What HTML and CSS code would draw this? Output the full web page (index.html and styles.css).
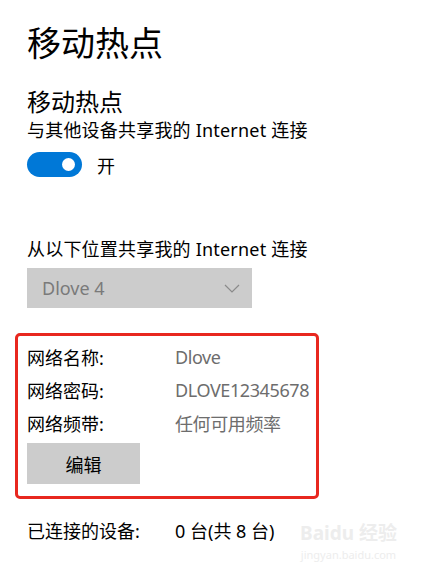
FILE: index.html
```html
<!DOCTYPE html>
<html lang="zh-CN">
<head>
  <meta charset="UTF-8">
  <meta name="viewport" content="width=device-width, initial-scale=1.0">
  <title>移动热点</title>
  <link rel="stylesheet" href="styles.css">
</head>
<body>
  <div class="page">
    <h1>移动热点</h1>

    <h2>移动热点</h2>
    <p class="desc">与其他设备共享我的 Internet 连接</p>
    <div class="toggle-row">
      <span class="toggle"><span class="knob"></span></span>
      <span>开</span>
    </div>

    <p class="share-label">从以下位置共享我的 Internet 连接</p>
    <div class="select">
      <span>Dlove 4</span>
      <svg width="16" height="9" viewBox="0 0 16 9"><path d="M1 1 L8 8 L15 1" fill="none" stroke="#8a8a8a" stroke-width="1.2"/></svg>
    </div>

    <div class="info-box">
      <div class="info-row"><span class="info-label">网络名称:</span><span class="info-value">Dlove</span></div>
      <div class="info-row"><span class="info-label">网络密码:</span><span class="info-value">DLOVE12345678</span></div>
      <div class="info-row"><span class="info-label">网络频带:</span><span class="info-value">任何可用频率</span></div>
      <button class="edit-btn">编辑</button>
    </div>

    <div class="info-row devices">
      <span class="info-label">已连接的设备:</span><span class="info-dark">0 台(共 8 台)</span>
    </div>
  </div>

  <div class="watermark">
    <div class="wm-logo">Baidu 经验</div>
    <div class="wm-url">jingyan.baidu.com</div>
  </div>
</body>
</html>
```

FILE: styles.css
```css
:root {
  --accent: #0078d7;
  --control-bg: #cccccc;
  --muted: #6d6d6d;
  --mark: #e8271f;
}

body {
  margin: 0;
  background: #fff;
  color: #000;
  font-family: "Noto Sans", "Noto Sans CJK SC", sans-serif;
  font-size: 18px;
  position: relative;
  width: 425px;
  height: 583px;
  overflow: hidden;
}

.page {
  padding: 20px 0 0 27px;
}

h1 {
  margin: 0;
  font-size: 34px;
  font-weight: normal;
  line-height: 46px;
}

h2 {
  margin: 21px 0 0;
  font-size: 24px;
  font-weight: normal;
  line-height: 30px;
}

.desc {
  margin: 0;
  line-height: 26px;
  letter-spacing: 0.2px;
}

.toggle-row {
  display: flex;
  align-items: center;
  gap: 15px;
  margin-top: 9px;
  height: 25px;
}

.toggle {
  display: flex;
  align-items: center;
  justify-content: flex-end;
  width: 55px;
  height: 25px;
  border-radius: 13px;
  background: var(--accent);
  box-sizing: border-box;
  padding-right: 7px;
}

.knob {
  width: 13px;
  height: 13px;
  border-radius: 50%;
  background: #fff;
}

.share-label {
  margin: 59px 0 0;
  line-height: 26px;
  letter-spacing: 0.2px;
}

.select {
  display: flex;
  align-items: center;
  justify-content: space-between;
  width: 225px;
  height: 40px;
  margin-top: 6px;
  padding: 0 12px 0 15px;
  box-sizing: border-box;
  background: var(--control-bg);
  color: #7a7a7a;
}

.info-box {
  margin: 25px 0 0 -12px;
  width: 304px;
  height: 166px;
  box-sizing: border-box;
  border: 3px solid var(--mark);
  border-radius: 5px;
  padding: 4px 0 0 9px;
}

.info-row {
  display: flex;
  height: 33px;
  align-items: center;
}

.info-label {
  width: 148px;
}

.info-value {
  color: var(--muted);
  letter-spacing: -0.4px;
}

.edit-btn {
  display: block;
  margin-top: 4px;
  width: 113px;
  height: 41px;
  border: none;
  background: var(--control-bg);
  font-family: inherit;
  font-size: 18px;
  color: #000;
}

.devices {
  margin-top: 14px;
}

.watermark {
  position: absolute;
  right: 28px;
  bottom: 22px;
  color: #ededed;
  text-align: center;
}

.wm-logo {
  font-size: 19px;
  font-weight: bold;
  line-height: 22px;
  margin-bottom: 4px;
}

.wm-url {
  font-size: 11px;
  line-height: 13px;
}
```
